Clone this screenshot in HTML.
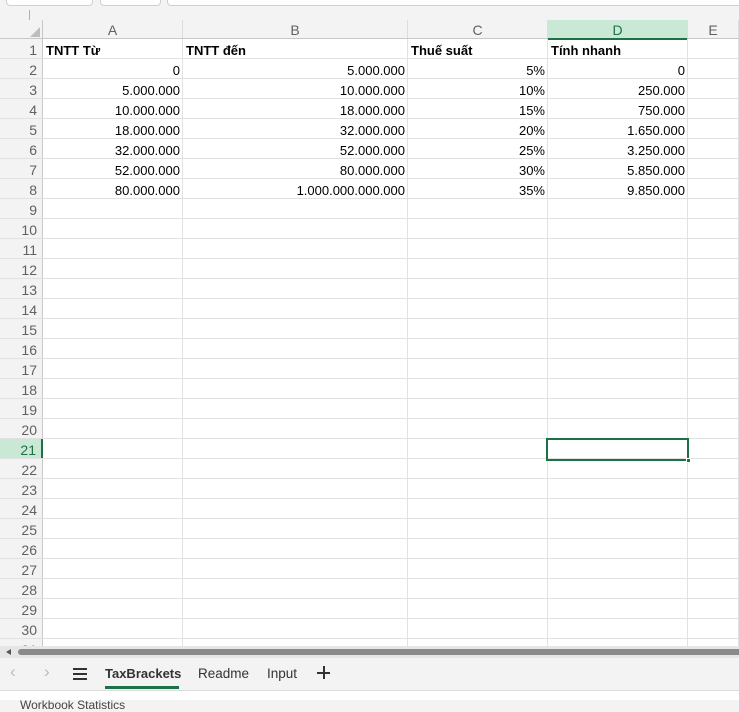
<!DOCTYPE html>
<html><head><meta charset="utf-8"><style>
*{box-sizing:border-box;margin:0;padding:0}
body{width:739px;height:700px;overflow:hidden;background:#f3f3f3;font-family:"Liberation Sans",Arial,sans-serif;position:relative}
.box{position:absolute;top:-4px;height:10px;background:#fff;border:1px solid #cfcfcf;border-radius:0 0 4px 4px}
#sheet{position:absolute;top:20px;left:0;width:739px;height:626px;overflow:hidden;background:#fff}
.r{display:flex;height:20px;border-bottom:1px solid #e1e1e1;font-size:13px;line-height:23px;color:#000}
.r>div{border-right:1px solid #e1e1e1;overflow:hidden;white-space:nowrap;padding:0 2px}
.h{background:#f3f3f3;border-right:1px solid #c8c8c8!important;color:#616161;text-align:right;padding-right:5px!important;font-size:14px}
.c0{width:43px}.c1{width:140px}.c2{width:225px}.c3{width:140px}.c4{width:140px}.c5{flex:1}
.n{text-align:right}
.b{font-weight:bold;padding-left:3px!important}
#hd{height:19px;background:#f3f3f3;border-bottom:1px solid #c8c8c8;color:#616161}
#hd>div{text-align:center;border-right:1px solid #dcdcdc;font-size:14px;line-height:21px}
</style></head><body>
<div class="box" style="left:6px;width:87px"></div>
<div class="box" style="left:100px;width:61px"></div>
<div class="box" style="left:167px;width:600px"></div>
<div style="position:absolute;left:29px;top:10px;width:1px;height:11px;background:#b0b0b0"></div>
<div style="position:absolute;left:30px;top:27px;width:0;height:0;border-left:10px solid transparent;border-bottom:10px solid #bdbdbd;z-index:5"></div>
<div id="sheet">
<div class="r" id="hd"><div class="c0" style="border-right:1px solid #c8c8c8"></div><div class="c1">A</div><div class="c2">B</div><div class="c3">C</div><div class="c4" style="background:#c9e8d5;color:#1e7145;border-bottom:2px solid #1e7145;height:20px">D</div><div class="c5">E</div></div>
<div class="r"><div class="c0 h">1</div><div class="c1 b">TNTT Từ</div><div class="c2 b">TNTT đến</div><div class="c3 b">Thuế suất</div><div class="c4 b">Tính nhanh</div><div class="c5"></div></div>
<div class="r"><div class="c0 h">2</div><div class="c1 n">0</div><div class="c2 n">5.000.000</div><div class="c3 n">5%</div><div class="c4 n">0</div><div class="c5"></div></div>
<div class="r"><div class="c0 h">3</div><div class="c1 n">5.000.000</div><div class="c2 n">10.000.000</div><div class="c3 n">10%</div><div class="c4 n">250.000</div><div class="c5"></div></div>
<div class="r"><div class="c0 h">4</div><div class="c1 n">10.000.000</div><div class="c2 n">18.000.000</div><div class="c3 n">15%</div><div class="c4 n">750.000</div><div class="c5"></div></div>
<div class="r"><div class="c0 h">5</div><div class="c1 n">18.000.000</div><div class="c2 n">32.000.000</div><div class="c3 n">20%</div><div class="c4 n">1.650.000</div><div class="c5"></div></div>
<div class="r"><div class="c0 h">6</div><div class="c1 n">32.000.000</div><div class="c2 n">52.000.000</div><div class="c3 n">25%</div><div class="c4 n">3.250.000</div><div class="c5"></div></div>
<div class="r"><div class="c0 h">7</div><div class="c1 n">52.000.000</div><div class="c2 n">80.000.000</div><div class="c3 n">30%</div><div class="c4 n">5.850.000</div><div class="c5"></div></div>
<div class="r"><div class="c0 h">8</div><div class="c1 n">80.000.000</div><div class="c2 n">1.000.000.000.000</div><div class="c3 n">35%</div><div class="c4 n">9.850.000</div><div class="c5"></div></div>
<div class="r"><div class="c0 h">9</div><div class="c1"></div><div class="c2"></div><div class="c3"></div><div class="c4"></div><div class="c5"></div></div>
<div class="r"><div class="c0 h">10</div><div class="c1"></div><div class="c2"></div><div class="c3"></div><div class="c4"></div><div class="c5"></div></div>
<div class="r"><div class="c0 h">11</div><div class="c1"></div><div class="c2"></div><div class="c3"></div><div class="c4"></div><div class="c5"></div></div>
<div class="r"><div class="c0 h">12</div><div class="c1"></div><div class="c2"></div><div class="c3"></div><div class="c4"></div><div class="c5"></div></div>
<div class="r"><div class="c0 h">13</div><div class="c1"></div><div class="c2"></div><div class="c3"></div><div class="c4"></div><div class="c5"></div></div>
<div class="r"><div class="c0 h">14</div><div class="c1"></div><div class="c2"></div><div class="c3"></div><div class="c4"></div><div class="c5"></div></div>
<div class="r"><div class="c0 h">15</div><div class="c1"></div><div class="c2"></div><div class="c3"></div><div class="c4"></div><div class="c5"></div></div>
<div class="r"><div class="c0 h">16</div><div class="c1"></div><div class="c2"></div><div class="c3"></div><div class="c4"></div><div class="c5"></div></div>
<div class="r"><div class="c0 h">17</div><div class="c1"></div><div class="c2"></div><div class="c3"></div><div class="c4"></div><div class="c5"></div></div>
<div class="r"><div class="c0 h">18</div><div class="c1"></div><div class="c2"></div><div class="c3"></div><div class="c4"></div><div class="c5"></div></div>
<div class="r"><div class="c0 h">19</div><div class="c1"></div><div class="c2"></div><div class="c3"></div><div class="c4"></div><div class="c5"></div></div>
<div class="r"><div class="c0 h">20</div><div class="c1"></div><div class="c2"></div><div class="c3"></div><div class="c4"></div><div class="c5"></div></div>
<div class="r"><div class="c0 h" style="background:#c9e8d5;color:#1e7145;border-right:2px solid #1e7145!important">21</div><div class="c1"></div><div class="c2"></div><div class="c3"></div><div class="c4"></div><div class="c5"></div></div>
<div class="r"><div class="c0 h">22</div><div class="c1"></div><div class="c2"></div><div class="c3"></div><div class="c4"></div><div class="c5"></div></div>
<div class="r"><div class="c0 h">23</div><div class="c1"></div><div class="c2"></div><div class="c3"></div><div class="c4"></div><div class="c5"></div></div>
<div class="r"><div class="c0 h">24</div><div class="c1"></div><div class="c2"></div><div class="c3"></div><div class="c4"></div><div class="c5"></div></div>
<div class="r"><div class="c0 h">25</div><div class="c1"></div><div class="c2"></div><div class="c3"></div><div class="c4"></div><div class="c5"></div></div>
<div class="r"><div class="c0 h">26</div><div class="c1"></div><div class="c2"></div><div class="c3"></div><div class="c4"></div><div class="c5"></div></div>
<div class="r"><div class="c0 h">27</div><div class="c1"></div><div class="c2"></div><div class="c3"></div><div class="c4"></div><div class="c5"></div></div>
<div class="r"><div class="c0 h">28</div><div class="c1"></div><div class="c2"></div><div class="c3"></div><div class="c4"></div><div class="c5"></div></div>
<div class="r"><div class="c0 h">29</div><div class="c1"></div><div class="c2"></div><div class="c3"></div><div class="c4"></div><div class="c5"></div></div>
<div class="r"><div class="c0 h">30</div><div class="c1"></div><div class="c2"></div><div class="c3"></div><div class="c4"></div><div class="c5"></div></div>
<div class="r"><div class="c0 h">31</div><div class="c1"></div><div class="c2"></div><div class="c3"></div><div class="c4"></div><div class="c5"></div></div>
</div>
<div style="position:absolute;left:546px;top:438px;width:143px;height:23px;border:2px solid #1e7145"></div>
<div style="position:absolute;left:686px;top:458px;width:5px;height:5px;background:#1e7145;border:1px solid #fff"></div>
<div style="position:absolute;left:0;top:646px;width:739px;height:12px;background:#e6e6e6"></div>
<div style="position:absolute;left:6px;top:649px;width:0;height:0;border-top:3px solid transparent;border-bottom:3px solid transparent;border-right:5px solid #555"></div>
<div style="position:absolute;left:18px;top:649px;width:721px;height:6px;background:#8a8a8a;border-radius:3px 0 0 3px"></div>
<div style="position:absolute;left:0;top:690px;width:739px;height:1px;background:#dcdcdc"></div>
<div style="position:absolute;left:0;top:691px;width:739px;height:9px;background:#fff"></div>
<div style="position:absolute;left:20px;top:698px;font-size:12px;color:#444">Workbook Statistics</div>
<div style="position:absolute;left:10px;top:662px;font-size:17px;color:#bbb">&#8249;</div>
<div style="position:absolute;left:44px;top:662px;font-size:17px;color:#bbb">&#8250;</div>
<div style="position:absolute;left:73px;top:668px;width:14px;height:2px;background:#333;box-shadow:0 5px 0 #333,0 10px 0 #333"></div>
<div style="position:absolute;left:105px;top:666px;font-size:13px;font-weight:bold;color:#333">TaxBrackets</div>
<div style="position:absolute;left:105px;top:686px;width:74px;height:3px;background:#1e7145"></div>
<div style="position:absolute;left:198px;top:666px;font-size:13.5px;color:#333">Readme</div>
<div style="position:absolute;left:267px;top:666px;font-size:13.5px;color:#333">Input</div>
<div style="position:absolute;left:317px;top:672px;width:13px;height:1.5px;background:#333"></div>
<div style="position:absolute;left:323px;top:666px;width:1.5px;height:13px;background:#333"></div>
</body></html>
